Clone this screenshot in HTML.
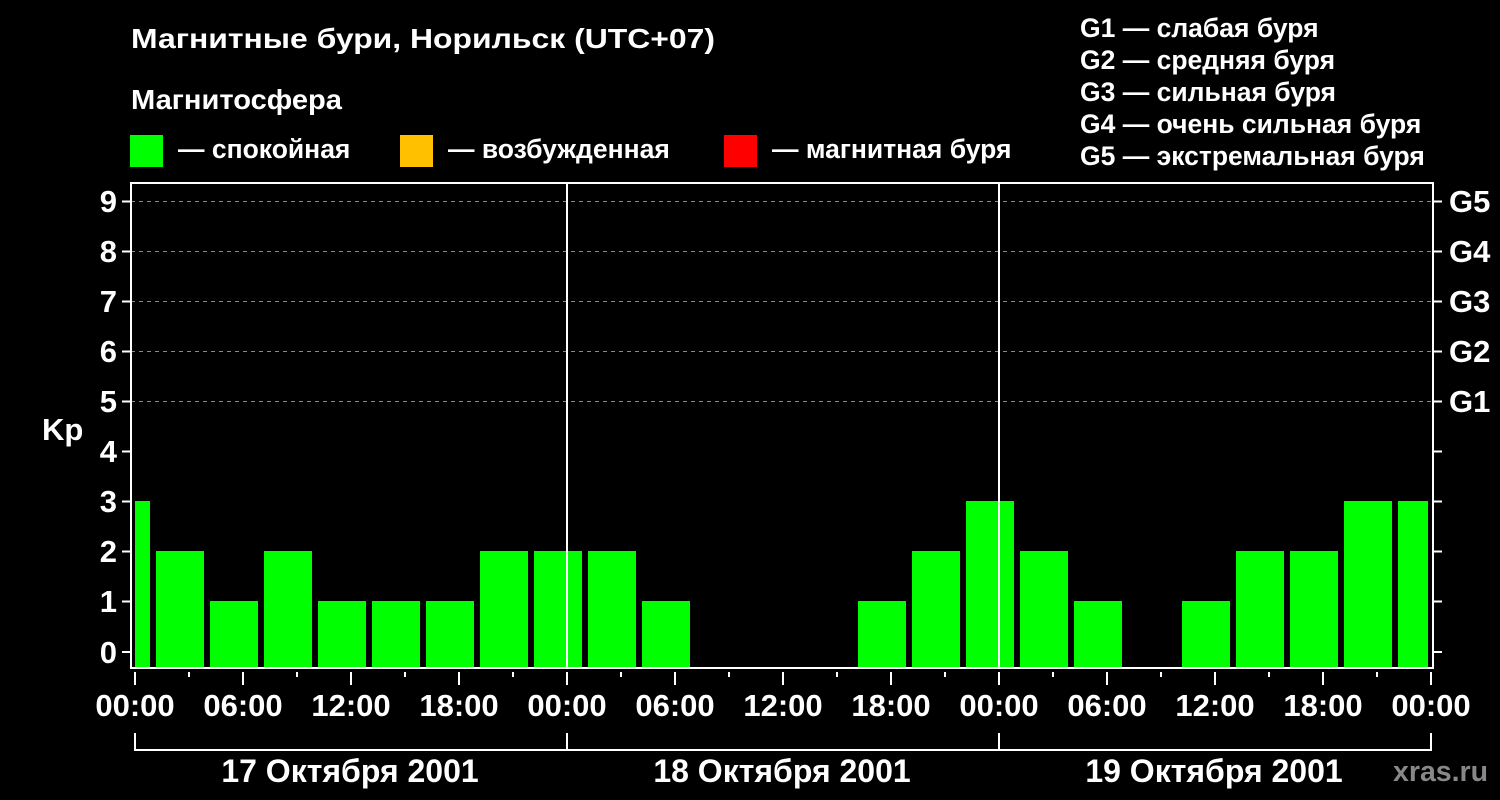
<!DOCTYPE html>
<html><head><meta charset="utf-8"><style>
html,body{margin:0;padding:0;background:#000;width:1500px;height:800px;overflow:hidden}
svg{display:block}
text{font-family:"Liberation Sans",Arial,sans-serif;font-weight:bold;fill:#fff}
</style></head><body>
<svg width="1500" height="800" viewBox="0 0 1500 800" xmlns="http://www.w3.org/2000/svg">
<rect width="1500" height="800" fill="#000"/>
<text x="131" y="48" font-size="28" textLength="584" lengthAdjust="spacingAndGlyphs">Магнитные бури, Норильск (UTC+07)</text>
<text x="131" y="109" font-size="28" textLength="211" lengthAdjust="spacingAndGlyphs">Магнитосфера</text>
<rect x="130" y="135" width="33" height="32" fill="#00ff00"/>
<text x="178" y="158" font-size="26.5">— спокойная</text>
<rect x="400" y="135" width="33" height="32" fill="#ffc000"/>
<text x="448" y="158" font-size="26.5">— возбужденная</text>
<rect x="724" y="135" width="33" height="32" fill="#ff0000"/>
<text x="772" y="158" font-size="26.5">— магнитная буря</text>
<g font-size="26.5">
<text x="1080" y="37">G1 — слабая буря</text>
<text x="1080" y="69">G2 — средняя буря</text>
<text x="1080" y="101">G3 — сильная буря</text>
<text x="1080" y="133">G4 — очень сильная буря</text>
<text x="1080" y="165">G5 — экстремальная буря</text>
</g>
<g stroke="#888" stroke-dasharray="4,4" stroke-width="1">
<line x1="131" y1="201.5" x2="1433" y2="201.5"/>
<line x1="131" y1="251.5" x2="1433" y2="251.5"/>
<line x1="131" y1="301.5" x2="1433" y2="301.5"/>
<line x1="131" y1="351.5" x2="1433" y2="351.5"/>
<line x1="131" y1="401.5" x2="1433" y2="401.5"/>
</g>
<g fill="#00ff00">
<rect x="135" y="501" width="15" height="167"/>
<rect x="156" y="551" width="48" height="117"/>
<rect x="210" y="601" width="48" height="67"/>
<rect x="264" y="551" width="48" height="117"/>
<rect x="318" y="601" width="48" height="67"/>
<rect x="372" y="601" width="48" height="67"/>
<rect x="426" y="601" width="48" height="67"/>
<rect x="480" y="551" width="48" height="117"/>
<rect x="534" y="551" width="48" height="117"/>
<rect x="588" y="551" width="48" height="117"/>
<rect x="642" y="601" width="48" height="67"/>
<rect x="858" y="601" width="48" height="67"/>
<rect x="912" y="551" width="48" height="117"/>
<rect x="966" y="501" width="48" height="167"/>
<rect x="1020" y="551" width="48" height="117"/>
<rect x="1074" y="601" width="48" height="67"/>
<rect x="1182" y="601" width="48" height="67"/>
<rect x="1236" y="551" width="48" height="117"/>
<rect x="1290" y="551" width="48" height="117"/>
<rect x="1344" y="501" width="48" height="167"/>
<rect x="1398" y="501" width="30" height="167"/>
</g>
<g stroke="#fff" stroke-width="2" fill="none">
<rect x="131" y="183" width="1302" height="485"/>
<line x1="567" y1="182" x2="567" y2="668"/>
<line x1="999" y1="182" x2="999" y2="668"/>
<path d="M122 201.5h9M122 251.5h9M122 301.5h9M122 351.5h9M122 401.5h9M122 451.5h9M122 501.5h9M122 551.5h9M122 601.5h9M122 652h9"/>
<path d="M1433 201.5h9M1433 251.5h9M1433 301.5h9M1433 351.5h9M1433 401.5h9M1433 451.5h9M1433 501.5h9M1433 551.5h9M1433 601.5h9M1433 652h9"/>
<path d="M135 672v13M189 672v5M243 672v13M297 672v5M351 672v13M405 672v5M459 672v13M513 672v5M567 672v13M621 672v5M675 672v13M729 672v5M783 672v13M837 672v5M891 672v13M945 672v5M999 672v13M1053 672v5M1107 672v13M1161 672v5M1215 672v13M1269 672v5M1323 672v13M1377 672v5M1431 672v13"/>
<path d="M135 733v17H1431V733M567 733v17M999 733v17"/>
</g>
<g font-size="31" text-anchor="end">
<text x="117" y="212">9</text><text x="117" y="262">8</text><text x="117" y="312">7</text><text x="117" y="362">6</text><text x="117" y="412">5</text><text x="117" y="462">4</text><text x="117" y="512">3</text><text x="117" y="562">2</text><text x="117" y="612">1</text><text x="117" y="663">0</text>
</g>
<text x="42" y="440" font-size="31">Kp</text>
<g font-size="31">
<text x="1449" y="212">G5</text><text x="1449" y="262">G4</text><text x="1449" y="312">G3</text><text x="1449" y="362">G2</text><text x="1449" y="412">G1</text>
</g>
<g font-size="31" text-anchor="middle">
<text x="135" y="716">00:00</text><text x="243" y="716">06:00</text><text x="351" y="716">12:00</text><text x="459" y="716">18:00</text>
<text x="567" y="716">00:00</text><text x="675" y="716">06:00</text><text x="783" y="716">12:00</text><text x="891" y="716">18:00</text>
<text x="999" y="716">00:00</text><text x="1107" y="716">06:00</text><text x="1215" y="716">12:00</text><text x="1323" y="716">18:00</text><text x="1431" y="716">00:00</text>
</g>
<g font-size="32" text-anchor="middle">
<text x="350" y="782">17 Октября 2001</text>
<text x="782" y="782">18 Октября 2001</text>
<text x="1214" y="782">19 Октября 2001</text>
</g>
<text x="1393" y="781" font-size="28.5" style="fill:#888">xras.ru</text>
</svg>
</body></html>
